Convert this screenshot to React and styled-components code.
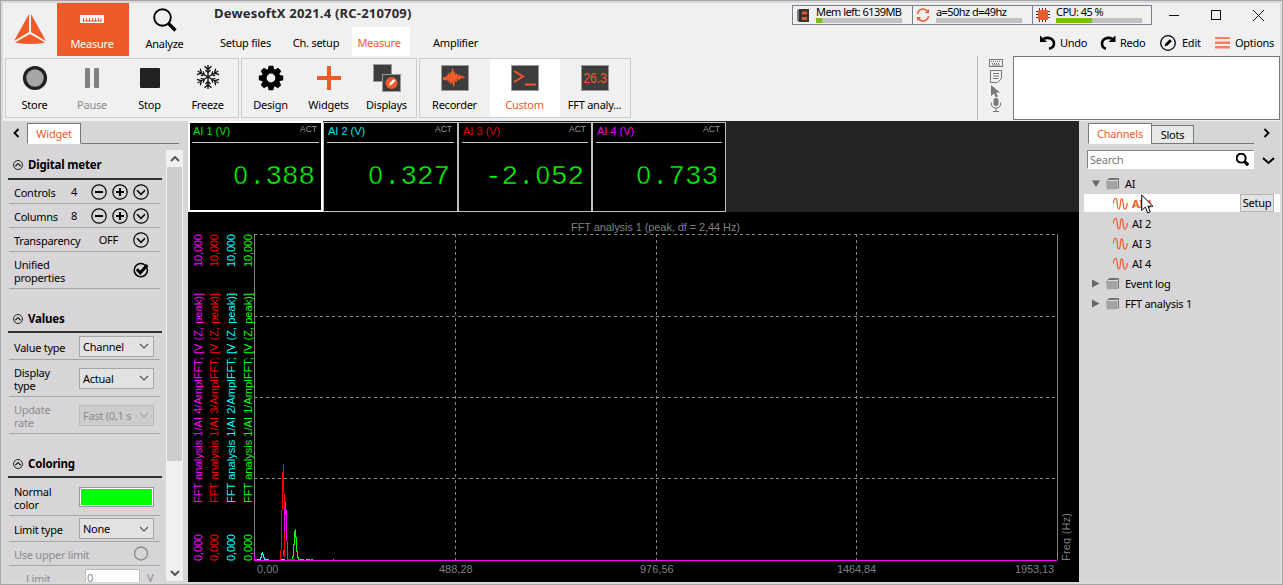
import React, { useState } from 'react';
import styled, { createGlobalStyle, css } from 'styled-components';

const ORANGE = '#f05a28';

const GlobalStyle = createGlobalStyle`
  * {
    box-sizing: border-box;
  }
  body {
    margin: 0;
    font-family: 'Noto Sans', Tahoma, sans-serif;
    font-size: 11px;
    letter-spacing: -0.25px;
    line-height: 13px;
    color: #000;
  }
  svg {
    display: block;
    flex: none;
  }
`;

const Window = styled.div`
  width: 1283px;
  height: 585px;
  display: flex;
  flex-direction: column;
  overflow: hidden;
  background: #f0f0f0;
  border: 1px solid #a6a6a6;
  box-shadow: inset 0 0 0 2px #d9d9d9;
  padding: 2px;
`;

const Header = styled.header`
  height: 53px;
  flex: none;
  display: flex;
`;

const LogoBox = styled.div`
  width: 54px;
  padding: 10px 0 0 10px;
`;

const ModeButton = styled.div`
  width: ${(props) => props.width}px;
  display: flex;
  flex-direction: column;
  align-items: center;
  justify-content: space-between;
  padding: ${(props) => props.top}px 2px 6px 0;
  color: ${(props) => (props.active ? '#fff' : '#000')};
  background: ${(props) => (props.active ? ORANGE : 'transparent')};
`;

const TitleBlock = styled.div`
  width: 440px;
  padding-left: 9px;
  display: flex;
  flex-direction: column;
  justify-content: space-between;
`;

const Title = styled.h1`
  margin: 0;
  padding: 2px 0 0 3px;
  font-size: 13px;
  line-height: 17px;
  letter-spacing: 0.2px;
  color: #2b2b2f;
`;

const MenuTabs = styled.nav`
  display: flex;
  height: 29px;
`;

const MenuTab = styled.div`
  width: ${(props) => props.width}px;
  padding-right: ${(props) => (props.active ? 4 : 0)}px;
  text-align: center;
  line-height: 32px;
  color: ${(props) => (props.active ? ORANGE : '#000')};
  background: ${(props) => (props.active ? '#fff' : 'transparent')};
`;

const SystemArea = styled.div`
  flex: 1;
  display: flex;
  flex-direction: column;
  align-items: flex-end;
`;

const StatusRow = styled.div`
  display: flex;
  align-items: flex-start;
  height: 27px;
  padding: 2px 0 0;
`;

const StatusBox = styled.div`
  width: ${(props) => props.width || 121}px;
  height: 20px;
  margin-right: -1px;
  border: 1px solid #76808c;
  display: flex;
  align-items: center;
  padding-left: 3px;
  letter-spacing: -0.55px;
`;

const StatusInfo = styled.div`
  margin-left: 6px;
  line-height: 10px;
  white-space: nowrap;
`;

const Meter = styled.div`
  width: 86px;
  height: 5px;
  margin-top: 1px;
  background: #c0c0c0;
  span {
    display: block;
    height: 5px;
    background: #7ebd13;
  }
`;

const WindowButtons = styled.div`
  display: flex;
  width: 129px;
  justify-content: space-between;
  padding: 4px 16px 0 18px;
`;

const Actions = styled.div`
  display: flex;
  align-items: center;
  height: 25px;
  padding-right: 7px;
`;

const Action = styled.div`
  display: flex;
  align-items: center;
  width: ${(props) => props.width}px;
  gap: ${(props) => props.gap || 4}px;
  white-space: nowrap;
`;

const Toolbar = styled.div`
  height: 65px;
  flex: none;
  display: flex;
`;

const Group = styled.div`
  height: 60px;
  width: ${(props) => props.width}px;
  margin: 2px 0 0 2px;
  border: 1px solid #cdcdcd;
  display: flex;
`;

const Tool = styled.div`
  width: ${(props) => props.width || 58}px;
  display: flex;
  flex-direction: column;
  align-items: center;
  justify-content: space-between;
  padding: 5px 1px 6px 0;
  white-space: nowrap;
  color: ${(props) => (props.disabled ? '#8a8a8a' : props.active ? ORANGE : '#000')};
  background: ${(props) => (props.active ? '#fff' : 'transparent')};
`;

const Notes = styled.div`
  width: 303px;
  margin-left: auto;
  border-left: 1px solid #bdbdbd;
  display: flex;
  height: 64px;
  padding-left: 11px;
`;

const NoteIcons = styled.div`
  width: 24px;
  padding-top: 3px;
`;

const NoteBox = styled.div`
  flex: 1;
  background: #fff;
  border: 1px solid #777;
`;

const Main = styled.main`
  flex: 1;
  display: flex;
  min-height: 0;
  background: #d7d5d8;
`;

const Sidebar = styled.aside`
  width: 185px;
  flex: none;
  padding-right: 5px;
  display: flex;
  flex-direction: column;
`;

const SideTabs = styled.div`
  height: 23px;
  display: flex;
  flex: none;
  padding: 2px 4px 0 5px;
`;

const Tab = styled.div`
  width: ${(props) => props.width}px;
  height: ${(props) => (props.active ? 21 : 19)}px;
  align-self: flex-end;
  border: 1px solid #777;
  border-bottom-color: ${(props) => (props.active ? '#fff' : '#777')};
  margin-left: ${(props) => (props.active ? 0 : -1)}px;
  text-align: center;
  line-height: ${(props) => (props.active ? 20 : 18)}px;
  background: ${(props) => (props.active ? '#fff' : '#e6e9e7')};
  color: ${(props) => (props.active ? ORANGE : '#000')};
`;

const TabLine = styled.div`
  flex: 1;
  border-bottom: 1px solid #777;
`;

const SideBody = styled.div`
  display: flex;
  flex: 1;
  min-height: 0;
`;

const Properties = styled.div`
  width: 163px;
  padding-left: 5px;
  overflow: hidden;
`;

const SectionHeader = styled.div`
  height: ${(props) => props.height || 44}px;
  width: 154px;
  border-bottom: 2px solid #303030;
  display: flex;
  align-items: flex-end;
  padding: 0 0 ${(props) => (props.height ? 7 : 6)}px 5px;
  gap: 5px;
  font-weight: bold;
  font-size: 11.5px;
  letter-spacing: -0.2px;
  svg {
    margin-bottom: 1px;
  }
`;

const Row = styled.div`
  height: ${(props) => props.height || 24}px;
  width: 151px;
  margin-left: 1px;
  border-bottom: 1px solid #a5a5a5;
  display: flex;
  align-items: center;
  padding: 0 0 0 5px;
  color: ${(props) => (props.disabled ? '#8c8a8d' : '#000')};
`;

const RowLabel = styled.span`
  width: ${(props) => props.width || 65}px;
  padding-top: 2px;
  padding-left: ${(props) => props.indent || 0}px;
`;

const RowValue = styled.span`
  width: ${(props) => props.width || 0}px;
  box-sizing: content-box;
  text-align: right;
  padding-right: 12px;
`;

const RoundButtons = styled.span`
  display: flex;
  gap: 5px;
  margin-left: auto;
  padding-right: 11px;
`;

const Select = styled.div`
  width: 75px;
  height: 21px;
  border: 1px solid ${(props) => (props.disabled ? '#bcbcbc' : '#a6a6a6')};
  background: ${(props) => (props.disabled ? '#cccccc' : '#e2e2e2')};
  display: flex;
  align-items: center;
  justify-content: space-between;
  padding: 0 4px 0 3px;
  white-space: nowrap;
`;

const Swatch = styled.div`
  width: 75px;
  height: 20px;
  border: 1px solid #999;
  padding: 1px;
  background: #fff;
  &::before {
    content: '';
    display: block;
    height: 16px;
    background: #00ff00;
  }
`;

const NumberField = styled.div`
  width: 55px;
  height: 18px;
  margin: 1px 7px 0 6px;
  padding: 1px;
  background: #fff;
  border: 1px solid #bbb;
`;

const Scrollbar = styled.div`
  width: 17px;
  margin: 6px 0 1px;
  background: #f0f0f0;
  display: flex;
  flex-direction: column;
  align-items: center;
`;

const ScrollArrow = styled.div`
  height: 17px;
  padding-top: 6px;
`;

const ScrollThumb = styled.div`
  width: 15px;
  height: 294px;
  margin-bottom: auto;
  background: #cdcdcd;
`;

const Display = styled.section`
  width: 891px;
  flex: none;
  display: flex;
  flex-direction: column;
  background: #000;
`;

const Meters = styled.div`
  height: 91px;
  display: flex;
  background: #232323;
`;

const DigitalMeter = styled.div`
  width: ${(props) => props.width}px;
  height: ${(props) => (props.selected ? 91 : 90)}px;
  border: 1px solid #c0c0c0;
  ${(props) =>
    props.selected &&
    css`
      border: 2px solid #fff;
    `}
  margin-top: ${(props) => (props.selected ? 0 : 1)}px;
  padding: ${(props) => (props.selected ? '1px 2px' : '1px 3px')};
  background: #000;
  font-family: 'Liberation Sans', Arial, sans-serif;
  letter-spacing: 0;
`;

const MeterHead = styled.div`
  height: 19px;
  display: flex;
  justify-content: space-between;
  border-bottom: 1px solid #c8c8c8;
  line-height: 15px;
  padding: 0 2px 0 1px;
  color: ${(props) => props.color};
  small {
    color: #999;
    font-size: 8.5px;
    line-height: 11px;
  }
`;

const MeterValue = styled.div`
  padding-top: 16px;
  text-align: right;
  padding-right: 4px;
  font-family: 'Liberation Mono', 'Courier New', monospace;
  font-size: 27.5px;
  line-height: 32px;
  color: #00ff00;
  -webkit-text-stroke: 0.5px #000;
`;

const Zero = styled.span`
  display: inline-block;
  width: 16.5px;
  text-align: center;
  font-family: 'Liberation Sans', Arial, sans-serif;
  font-size: 25.5px;
`;

const Channels = styled.aside`
  flex: 1;
  margin-left: 5px;
`;

const ChannelTabs = styled.div`
  display: flex;
  height: 23px;
  padding: 2px 2px 0 4px;
`;

const SearchRow = styled.div`
  display: flex;
  align-items: center;
  height: 19px;
  margin: 6px 0 0 3px;
`;

const SearchBox = styled.div`
  width: 167px;
  height: 19px;
  border: 1px solid #828282;
  border-right-color: #fff;
  border-bottom-color: #fff;
  background: #fff;
  color: #777;
  display: flex;
  align-items: center;
  justify-content: space-between;
  padding: 0 4px 1px 2px;
`;

const Tree = styled.div`
  padding: 4px 0 0;
`;

const TreeRow = styled.div`
  height: ${(props) => (props.selected ? 18 : 20)}px;
  margin: ${(props) => (props.selected ? '1px 0' : '0')};
  display: flex;
  align-items: center;
  padding-left: ${(props) => (props.leaf ? 29 : 8)}px;
  background: ${(props) => (props.selected ? '#fff' : 'transparent')};
  color: ${(props) => (props.selected ? ORANGE : '#000')};
  font-weight: ${(props) => (props.selected ? 'bold' : 'normal')};
  gap: ${(props) => (props.leaf ? 4 : 6)}px;
  position: relative;
`;

const SetupButton = styled.div`
  width: 34px;
  height: 18px;
  margin: 0 6px 0 auto;
  border: 1px solid #b5b5b5;
  background: #e2e2e2;
  color: #000;
  font-weight: normal;
  line-height: 16px;
  text-align: center;
`;

const Cursor = styled.svg`
  position: absolute;
  left: 57px;
  top: 0;
`;

const Logo = () => (
  <svg width="34" height="32" viewBox="0 0 34 32" fill={ORANGE}>
    <path d="M16 1v18L1 28z" />
    <path d="M18 1v18l15 9z" />
    <path d="M17 21L32 29.5q-15 3-30 0z" />
  </svg>
);

const RulerIcon = () => (
  <svg width="24" height="8">
    <rect width="24" height="8" fill="#fff" />
    <path d="M3.5 3v4M6.5 3v3M9.5 3v4M12.5 3v3M15.5 3v4M18.5 3v3M21 3v4" stroke={ORANGE} fill="none" />
    <path d="M3 6h18" stroke={ORANGE} />
  </svg>
);

const SearchIcon = ({ size = 24, width = 1.9 }) => (
  <svg width={size} height={size} viewBox="0 0 24 24" fill="none" stroke="#000">
    <circle cx="9.5" cy="9.5" r="8.3" strokeWidth={width} />
    <path d="M15.5 15.5L22.5 22.5" strokeWidth={width * 1.7} />
  </svg>
);

const FreezeIcon = () => (
  <svg width="24" height="26" viewBox="-12.5 -13.5 25 27" stroke="#111" strokeWidth="1.4" fill="none">
    {[0, 60, 120, 180, 240, 300].map((angle) => (
      <path key={angle} transform={`rotate(${angle})`} d="M0 0V-12.5M-3.6 -11.3L0 -7.8L3.6 -11.3M-2.6 -7.2L0 -4.6L2.6 -7.2" />
    ))}
  </svg>
);

const GearIcon = () => (
  <svg width="26" height="28" viewBox="-13 -14 26 28">
    {[0, 45, 90, 135].map((angle) => (
      <path key={angle} transform={`rotate(${angle})`} d="M-3.3 -8L-2.3 -12.2H2.3L3.3 -8V8L2.3 12.2H-2.3L-3.3 8z" />
    ))}
    <circle r="9.2" />
    <circle r="4.4" fill="#f0f0f0" />
  </svg>
);

const DisplaysIcon = () => (
  <svg width="28" height="28">
    <rect x=".5" y=".5" width="18" height="17" fill="#3d3d3d" stroke="#999" />
    <rect x="9.5" y="10.5" width="18" height="17" fill="#3d3d3d" stroke="#999" />
    <circle cx="18.5" cy="19" r="6" fill={ORANGE} />
    <path d="M16 21.5l.8-2.5 4-4 1.7 1.7-4 4z" fill="#fff" />
  </svg>
);

const ScreenSvg = styled.svg`
  margin-top: 1px;
`;

const ScreenIcon = ({ children }) => (
  <ScreenSvg width="28" height="26">
    <rect x=".5" y=".5" width="27" height="25" fill="#3d3d3d" stroke="#999" />
    {children}
  </ScreenSvg>
);

const MinusCircle = () => (
  <svg width="16" height="16" fill="none" stroke="#000">
    <circle cx="8" cy="8" r="7.2" strokeWidth="1.2" />
    <path d="M4 8h8" strokeWidth="2" />
  </svg>
);

const PlusCircle = () => (
  <svg width="16" height="16" fill="none" stroke="#000">
    <circle cx="8" cy="8" r="7.2" strokeWidth="1.2" />
    <path d="M4 8h8M8 4v8" strokeWidth="2" />
  </svg>
);

const DownCircle = () => (
  <svg width="16" height="16" fill="none" stroke="#000">
    <circle cx="8" cy="8" r="7.2" strokeWidth="1.2" />
    <path d="M4 6.3l4 4 4-4" strokeWidth="1.6" />
  </svg>
);

const CheckCircle = () => (
  <svg width="16" height="16" fill="none" stroke="#000">
    <circle cx="7.8" cy="8.2" r="6.6" strokeWidth="1.5" />
    <path d="M3.8 7.2l3.5 3.6L14.3 3" strokeWidth="3" />
  </svg>
);

const CollapseIcon = () => (
  <svg width="10" height="10" fill="none" stroke="#222">
    <circle cx="5" cy="5" r="4.5" />
    <path d="M2.3 6.2L5 3.6l2.7 2.6" strokeWidth="1.2" />
  </svg>
);

const Chevron = ({ d = 'M1 1l4 4 4-4', color = '#555', width = 1.2, w = 10, h = 6 }) => (
  <svg width={w} height={h} fill="none" stroke={color} strokeWidth={width}>
    <path d={d} />
  </svg>
);

const FolderIcon = () => (
  <svg width="13" height="13">
    <path d="M1.5 4V2.5L4 1h8.5v1.5z" fill="#6f6f6f" />
    <path d="M12 1h1v10L12 12z" fill="#777" />
    <path d="M0 4h11.5v8.2H.8z" fill="#a3a3a3" />
    <path d="M2 3.5h9" stroke="#ddd" />
  </svg>
);

const WaveIcon = () => (
  <svg width="15" height="13" fill="none" stroke={ORANGE} strokeWidth="1.2">
    <path d="M.5 6.5C.5 0 3.5 0 4 4S4.3 12 5.8 12 7.2 8 7.5 5 9 0 9.8 4 10 12 11.8 12 14 9.5 14.3 6" />
  </svg>
);

const Triangle = ({ open }) => (
  <svg width="8" height="9" fill="#666">
    <path d={open ? 'M0 1.5h8L4 8z' : 'M0 .5v8l7.5-4z'} />
  </svg>
);

const meters = [
  { name: 'AI 1 (V)', value: '0.388', color: '#00e000', width: 135 },
  { name: 'AI 2 (V)', value: '0.327', color: '#00e5e5', width: 135 },
  { name: 'AI 3 (V)', value: '-2.052', color: '#e80000', width: 134 },
  { name: 'AI 4 (V)', value: '0.733', color: '#f000f0', width: 134 },
];

const axes = [
  { x: 14, ai: 4, color: '#ff00ff' },
  { x: 30, ai: 3, color: '#ff0000' },
  { x: 47, ai: 2, color: '#00ffff' },
  { x: 64, ai: 1, color: '#00ff00' },
];

const FftChart = () => (
  <svg width="891" height="370" fontFamily="'Liberation Sans', Arial, sans-serif" fontSize="11" letterSpacing="0">
    <text x="383" y="19" fill="#808080" textLength="169">FFT analysis 1 (peak, df = 2,44 Hz)</text>
    <g stroke="#8c8c8c" strokeDasharray="3 3" shapeRendering="crispEdges">
      <path d="M66 22.5H869M66 104.5H869M66 185.5H869M66 266.5H869" />
      <path d="M267.5 22V348M468.5 22V348M668.5 22V348" />
    </g>
    <path d="M66.5 22V348M869.5 22V348" stroke="#808080" shapeRendering="crispEdges" />
    {axes.map(({ x, ai, color }) => (
      <g key={ai} fill={color}>
        <text transform={`translate(${x} 349) rotate(-90)`} textLength="27">0,000</text>
        <text transform={`translate(${x} 291) rotate(-90)`} textLength="210">
          {`FFT analysis 1/AI ${ai}/AmplFFT; [V (Z, peak)]`}
        </text>
        <text transform={`translate(${x} 55) rotate(-90)`} textLength="33">10,000</text>
      </g>
    ))}
    <g fill="none" strokeWidth="1" shapeRendering="crispEdges">
      <path d="M104.5 347.5v-3h1v-12h1v-13h1v-3v9h1v14h1v6h1v2H116M118 347.5h4M123 347.5h2M145 347.5h1" stroke="#00ff00" />
      <path d="M68 347.5h4.5v-2h1v-4h1v-2v3h1v3h1v2H80.5M93 347.5h4" stroke="#00ffff" />
      <path d="M92.5 348v-10M93.5 338v-40M94.5 298v-38M95.5 281v-29M96.5 281v64M98.5 347.5H107" stroke="#ff0000" />
      <path d="M66.5 343v4h2M95.5 344v-6M96.5 320v-24M97.5 303v-14M98.5 298v31M99.5 329v18" stroke="#ff00ff" />
      <path d="M66 348.5H869" stroke="#ff00ff" />
    </g>
    <g fill="#808080">
      <text x="69" y="361">0,00</text>
      <text x="251" y="361">488,28</text>
      <text x="452" y="361">976,56</text>
      <text x="649" y="361" textLength="39">1464,84</text>
      <text x="827" y="361" textLength="39">1953,13</text>
      <text transform="translate(882 349) rotate(-90)" textLength="48">Freq (Hz)</text>
    </g>
  </svg>
);

const Digits = ({ value }) => (
  <MeterValue>
    {value.split('').map((char, i) => (char === '0' ? <Zero key={i}>0</Zero> : char))}
  </MeterValue>
);

const App = () => {
  const [selected, setSelected] = useState(1);

  return (
    <Window>
      <GlobalStyle />
      <Header>
        <LogoBox>
          <Logo />
        </LogoBox>
        <ModeButton active width={72} top={12}>
          <RulerIcon />
          Measure
        </ModeButton>
        <ModeButton width={73} top={5}>
          <SearchIcon />
          Analyze
        </ModeButton>
        <TitleBlock>
          <Title>DewesoftX 2021.4 (RC-210709)</Title>
          <MenuTabs>
            <MenuTab width={69}>Setup files</MenuTab>
            <MenuTab width={72}>Ch. setup</MenuTab>
            <MenuTab active width={58}>Measure</MenuTab>
            <MenuTab width={91}>Amplifier</MenuTab>
          </MenuTabs>
        </TitleBlock>
        <SystemArea>
          <StatusRow>
            <StatusBox>
              <svg width="14" height="15">
                <path d="M1 2l3-1v13l-3-1z" fill="#777" />
                <rect x="3" y="1" width="10" height="13" fill="#333" />
                <path d="M6 3.5h5v3H6zM6 9h5v3H6z" fill={ORANGE} />
              </svg>
              <StatusInfo>
                Mem left: 6139MB
                <Meter><span style={{ width: '7%' }} /></Meter>
              </StatusInfo>
            </StatusBox>
            <StatusBox>
              <svg width="14" height="14" fill="none" stroke={ORANGE} strokeWidth="1.6">
                <path d="M1.5 6A5.5 5.5 0 0 1 11.5 3.5M12.5 8A5.5 5.5 0 0 1 2.5 10.5" />
                <path d="M13 1v4H9zM1 13V9h4z" fill={ORANGE} stroke="none" />
              </svg>
              <StatusInfo>
                a=50hz d=49hz
                <Meter />
              </StatusInfo>
            </StatusBox>
            <StatusBox width={120}>
              <svg width="14" height="14">
                <path d="M3.5 0v14M6.5 0v14M9.5 0v14M0 3.5h14M0 6.5h14M0 9.5h14" stroke="#333" />
                <rect x="2" y="2" width="10" height="10" rx="1" fill={ORANGE} />
              </svg>
              <StatusInfo>
                CPU: 45 %
                <Meter><span style={{ width: '42%' }} /></Meter>
              </StatusInfo>
            </StatusBox>
            <WindowButtons>
              <svg width="11" height="13" stroke="#111"><path d="M0 6.5h10" /></svg>
              <svg width="11" height="13" stroke="#111" fill="none"><rect x=".5" y="1.5" width="9" height="9" /></svg>
              <svg width="11" height="13" stroke="#111"><path d="M0 1l11 11M11 1L0 12" /></svg>
            </WindowButtons>
          </StatusRow>
          <Actions>
            <Action width={60}>
              <svg width="16" height="15" fill="none" stroke="#000" strokeWidth="2.6">
                <path d="M3.5 3.8C9 1.5 14 4 14 8.5c0 2.500-1.500 4.500-5 5.200" />
                <path d="M0 .5V7h7z" fill="#000" stroke="none" />
              </svg>
              Undo
            </Action>
            <Action width={60}>
              <svg width="16" height="15" fill="none" stroke="#000" strokeWidth="2.6">
                <path d="M12.5 3.800C7 1.500 2 4 2 8.500c0 2.500 1 4.500 4 5.200" />
                <path d="M15.500 .5V7h-7z" fill="#000" stroke="none" />
              </svg>
              Redo
            </Action>
            <Action width={55} gap={6}>
              <svg width="16" height="16" fill="none" stroke="#000">
                <circle cx="8" cy="8" r="7.3" strokeWidth="1.3" />
                <path d="M4.5 11.5l1-3L9.8 4.2l2 2L7.5 10.5z" fill="#000" stroke="none" />
              </svg>
              Edit
            </Action>
            <Action width={58} gap={5}>
              <svg width="15" height="12" fill="#f58058"><path d="M0 0h15v2H0zM0 4.500h15v2.500H0zM0 9h15v2.500H0z" /></svg>
              Options
            </Action>
          </Actions>
        </SystemArea>
      </Header>

      <Toolbar>
        <Group width={234}>
          <Tool width={58}>
            <svg width="26" height="28"><circle cx="13" cy="14" r="10.4" fill="#a6a6a6" stroke="#222" strokeWidth="3.4" /></svg>
            Store
          </Tool>
          <Tool width={57} disabled>
            <svg width="26" height="28" fill="#808080"><rect x="6" y="4" width="5" height="20" rx="1" /><rect x="15" y="4" width="5" height="20" rx="1" /></svg>
            Pause
          </Tool>
          <Tool>
            <svg width="26" height="28"><rect x="3" y="4" width="20" height="20" rx="1" fill="#222" /></svg>
            Stop
          </Tool>
          <Tool>
            <FreezeIcon />
            Freeze
          </Tool>
        </Group>
        <Group width={176}>
          <Tool>
            <GearIcon />
            Design
          </Tool>
          <Tool>
            <svg width="26" height="28" stroke={ORANGE} strokeWidth="4"><path d="M1 14h24M13 2v24" /></svg>
            Widgets
          </Tool>
          <Tool>
            <DisplaysIcon />
            Displays
          </Tool>
        </Group>
        <Group width={212}>
          <Tool width={70}>
            <ScreenIcon>
              <path d="M2 12h3l.6-2 .8 1 .8-4 1 3 1-3 1 1 .8-4 1-1 .8 5 1-2 .8 4 1.5-2 1 3 1.5-2 1 2.5 1.5-1 1 1 2.5 1-3 1-1.5-.5-1 1.5-1.5 1-1-2-1 4-1.5-2-.8 5-1 2-1-6-.8 2-1 1-.8-4-1 3-.8-4-1 2-.6-1.500H2z" fill={ORANGE} />
            </ScreenIcon>
            Recorder
          </Tool>
          <Tool width={70} active>
            <ScreenIcon>
              <path d="M3 6l9 5.5L3 17M14 19.5h11" fill="none" stroke={ORANGE} strokeWidth="2" />
            </ScreenIcon>
            Custom
          </Tool>
          <Tool width={70}>
            <ScreenIcon>
              <text x="2.5" y="18" fill={ORANGE} fontSize="14" fontFamily="Liberation Sans, sans-serif" textLength="23" lengthAdjust="spacingAndGlyphs">26.3</text>
            </ScreenIcon>
            FFT analy...
          </Tool>
        </Group>
        <Notes>
          <NoteIcons>
            <svg width="14" height="54" fill="none" stroke="#777">
              <rect x=".5" y=".5" width="13" height="7" />
              <path d="M2 2.5h10M3 4.5h8" strokeDasharray="1 1" />
              <path d="M3 6h8" />
              <path d="M1.5 11.5h11v8l-4 4h-7zM4 14.5h6M4 17h6M4 19.5h5" />
              <path d="M2 26v11l3-2.5 2 4 2-1-2-4h4z" fill="#777" stroke="none" />
              <rect x="4.5" y="39" width="5" height="8" rx="2.5" fill="#777" stroke="none" />
              <path d="M2.5 43.5v1.5q0 4 4.5 4t4.5-4v-1.5M7 49v3M4 52.5h6" />
            </svg>
          </NoteIcons>
          <NoteBox />
        </Notes>
      </Toolbar>

      <Main>
        <Sidebar>
          <SideTabs>
            <svg width="19" height="20" fill="none" stroke="#000" strokeWidth="1.8"><path d="M10.5 6L6.5 10l4 4" /></svg>
            <Tab active width={54}>Widget</Tab>
            <TabLine />
          </SideTabs>
          <SideBody>
            <Properties>
              <SectionHeader height={36}><CollapseIcon />Digital meter</SectionHeader>
              <Row>
                <RowLabel width={50}>Controls</RowLabel>
                <RowValue width={13}>4</RowValue>
                <RoundButtons><MinusCircle /><PlusCircle /><DownCircle /></RoundButtons>
              </Row>
              <Row>
                <RowLabel width={50}>Columns</RowLabel>
                <RowValue width={13}>8</RowValue>
                <RoundButtons><MinusCircle /><PlusCircle /><DownCircle /></RoundButtons>
              </Row>
              <Row>
                <RowLabel width={70}>Transparency</RowLabel>
                <RowValue width={34}>OFF</RowValue>
                <RoundButtons><DownCircle /></RoundButtons>
              </Row>
              <Row height={37}>
                <RowLabel>Unified properties</RowLabel>
                <RoundButtons><CheckCircle /></RoundButtons>
              </Row>

              <SectionHeader><CollapseIcon />Values</SectionHeader>
              <Row height={27}>
                <RowLabel>Value type</RowLabel>
                <Select>Channel <Chevron /></Select>
              </Row>
              <Row height={37}>
                <RowLabel>Display<br />type</RowLabel>
                <Select>Actual <Chevron /></Select>
              </Row>
              <Row height={37} disabled>
                <RowLabel>Update<br />rate</RowLabel>
                <Select disabled>Fast (0,1 s <Chevron color="#aaa" /></Select>
              </Row>

              <SectionHeader><CollapseIcon />Coloring</SectionHeader>
              <Row height={38}>
                <RowLabel>Normal<br />color</RowLabel>
                <Swatch />
              </Row>
              <Row height={26}>
                <RowLabel>Limit type</RowLabel>
                <Select>None <Chevron /></Select>
              </Row>
              <Row disabled>
                <RowLabel width={90}>Use upper limit</RowLabel>
                <RoundButtons>
                  <svg width="15" height="15"><circle cx="7" cy="7.5" r="6.5" fill="none" stroke="#8c8c8c" strokeWidth="1.4" /></svg>
                </RoundButtons>
              </Row>
              <Row disabled>
                <RowLabel indent={12}>Limit</RowLabel>
                <NumberField>0</NumberField>
                V
              </Row>
            </Properties>
            <Scrollbar>
              <ScrollArrow><Chevron d="M1 5l4-4 4 4" width={2} /></ScrollArrow>
              <ScrollThumb />
              <ScrollArrow><Chevron width={2} /></ScrollArrow>
            </Scrollbar>
          </SideBody>
        </Sidebar>

        <Display>
          <Meters>
            {meters.map(({ name, value, color, width }, i) => (
              <DigitalMeter key={name} width={width} selected={i === 0}>
                <MeterHead color={color}>{name}<small>ACT</small></MeterHead>
                <Digits value={value} />
              </DigitalMeter>
            ))}
          </Meters>
          <FftChart />
        </Display>

        <Channels>
          <ChannelTabs>
            <Tab active width={64}>Channels</Tab>
            <Tab width={43}>Slots</Tab>
            <TabLine />
            <svg width="24" height="20" fill="none" stroke="#000" strokeWidth="1.8"><path d="M10.5 6l4 4-4 4" /></svg>
          </ChannelTabs>
          <SearchRow>
            <SearchBox>
              Search
              <SearchIcon size={13} width={3.6} />
            </SearchBox>
            <svg width="24" height="12" fill="none" stroke="#000" strokeWidth="2"><path d="M9 4l5.5 5L20 4" /></svg>
          </SearchRow>
          <Tree>
            <TreeRow><Triangle open /><FolderIcon />AI</TreeRow>
            {[1, 2, 3, 4].map((n) => (
              <TreeRow key={n} leaf selected={selected === n} onClick={() => setSelected(n)}>
                <WaveIcon />
                AI {n}
                {selected === n && <SetupButton>Setup</SetupButton>}
                {n === 1 && (
                  <Cursor width="13" height="20" fill="#fff" stroke="#000">
                    <path d="M.7 1v15.5l3.6-3.4 2.4 5.8 2.6-1.1-2.4-5.6h5z" />
                  </Cursor>
                )}
              </TreeRow>
            ))}
            <TreeRow><Triangle /><FolderIcon />Event log</TreeRow>
            <TreeRow><Triangle /><FolderIcon />FFT analysis 1</TreeRow>
          </Tree>
        </Channels>
      </Main>
    </Window>
  );
};

export default App;
